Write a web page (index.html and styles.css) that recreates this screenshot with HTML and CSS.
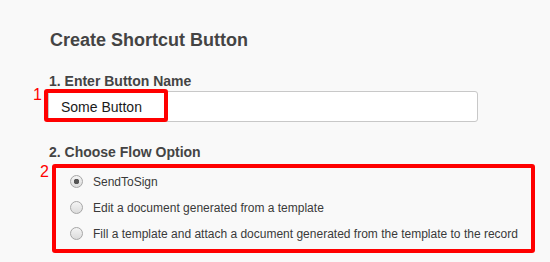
FILE: index.html
```html
<!DOCTYPE html>
<html lang="en">
<head>
    <meta charset="UTF-8">
    <title>Create Shortcut Button</title>
    <link rel="stylesheet" href="styles.css">
</head>
<body>
    <main class="panel">
        <h1 class="panel-title">Create Shortcut Button</h1>

        <!-- Step 1 -->
        <section class="step">
            <label class="step-label" for="buttonName">1. Enter Button Name</label>
            <div class="input-wrap">
                <input id="buttonName" class="text-input" type="text" value="Some Button">
                <span class="mark mark-name"></span>
                <span class="mark-num mark-num-1">1</span>
            </div>
        </section>

        <!-- Step 2 -->
        <section class="step">
            <div class="step-label">2. Choose Flow Option</div>
            <div class="options">
                <span class="mark-num mark-num-2">2</span>
                <label class="option"><input type="radio" name="flow" checked> SendToSign</label>
                <label class="option"><input type="radio" name="flow"> Edit a document generated from a template</label>
                <label class="option"><input type="radio" name="flow"> Fill a template and attach a document generated from the template to the record</label>
            </div>
        </section>
    </main>
</body>
</html>
```

FILE: styles.css
```css
:root {
    --page-bg: #F9F9F9;
    --text-main: #444444;
    --text-option: #3a3a3a;
    --text-input: #1a1a1a;
    --border-gray: #C8C8C8;
    --mark-red: #FF0000;
}

body {
    margin: 0;
    background-color: var(--page-bg);
    font-family: 'Liberation Sans', Arial, sans-serif;
    color: var(--text-main);
}

.panel {
    padding: 29px 0 0 48px;
}

.panel-title {
    margin: 0 0 22px 2px;
    font-size: 18px;
    line-height: 22px;
    font-weight: bold;
}

.step-label {
    display: block;
    margin-left: 1px;
    font-size: 14px;
    font-weight: bold;
    line-height: 16px;
}

.input-wrap {
    position: relative;
    width: 430px;
    margin-top: 2px;
}

.text-input {
    display: block;
    box-sizing: border-box;
    width: 430px;
    height: 31px;
    padding: 0 12px;
    border: 1px solid var(--border-gray);
    border-radius: 3px;
    background: #fff;
    font-family: inherit;
    font-size: 14px;
    color: var(--text-input);
}

/* Red annotation marks */
.mark {
    position: absolute;
    border: 4px solid var(--mark-red);
    border-radius: 3px;
    pointer-events: none;
}

.mark-name {
    left: -4px;
    top: -2px;
    width: 116px;
    height: 25px;
}

.mark-num {
    position: absolute;
    color: var(--mark-red);
    font-size: 16px;
    font-weight: normal;
    line-height: 16px;
}

.mark-num-1 {
    left: -15px;
    top: -4px;
}

.mark-num-2 {
    left: -16px;
    top: -4px;
}

.step + .step {
    margin-top: 22px;
}

.options {
    position: relative;
    box-sizing: border-box;
    width: 483px;
    margin: 4px 0 0 4px;
    padding: 1px 0 2px 14px;
    border: 4px solid var(--mark-red);
    border-radius: 3px;
}

.option {
    display: flex;
    align-items: center;
    gap: 10px;
    height: 26px;
    font-size: 12px;
    color: var(--text-option);
}

.option input {
    appearance: none;
    width: 13px;
    height: 13px;
    margin: 0 0 2px;
    border: 1px solid #a6a6a6;
    border-radius: 50%;
    background: linear-gradient(#f4f4f4, #dcdcdc);
}

.option input:checked {
    background: radial-gradient(circle, #555 0 2.5px, transparent 3px), linear-gradient(#f4f4f4, #dcdcdc);
}
```
